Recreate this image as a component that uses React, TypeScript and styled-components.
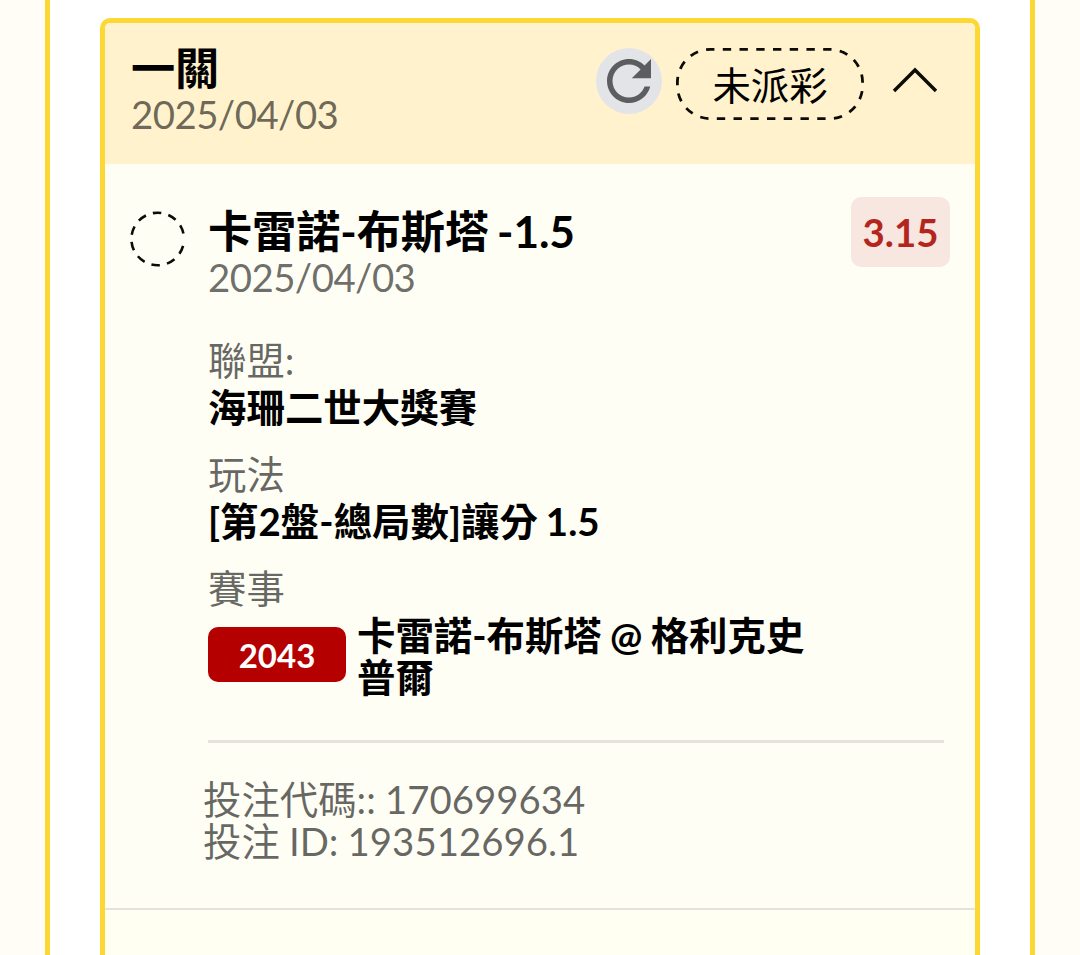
import { FC, ReactNode } from 'react';
import styled, { createGlobalStyle } from 'styled-components';

interface FieldTypes {
  label: string;
  value: string;
}

const fields: FieldTypes[] = [
  { label: '聯盟:', value: '海珊二世大獎賽' },
  { label: '玩法', value: '[第2盤-總局數]讓分 1.5' },
];

const RefreshIcon = () => (
  <svg width="66" height="66" viewBox="0 0 24 24" fill="#5c5d5e">
    <path d="M17.65 6.35C16.2 4.9 14.21 4 12 4c-4.42 0-7.99 3.58-7.99 8s3.57 8 7.99 8c3.73 0 6.84-2.55 7.73-6h-2.08c-.82 2.33-3.04 4-5.65 4-3.31 0-6-2.69-6-6s2.69-6 6-6c1.66 0 3.14.69 4.22 1.78L13 11h7V4l-2.35 2.35z" />
  </svg>
);

const ChevronUp = () => (
  <svg width="46" height="28" viewBox="0 0 46 28" fill="none">
    <path d="M2 25L23 4L44 25" stroke="#0c0b06" strokeWidth="3.4" />
  </svg>
);

const StatusPill: FC<{ children: ReactNode }> = ({ children }) => (
  <Pill>
    <svg width="188" height="72" fill="none">
      <rect
        x="1.4"
        y="1.4"
        width="185.2"
        height="69.2"
        rx="33"
        pathLength="27"
        stroke="#0c0b06"
        strokeWidth="2.8"
        strokeDasharray="0.5 0.5"
        strokeDashoffset="0.26"
      />
    </svg>
    {children}
  </Pill>
);

const PendingMark = () => (
  <svg width="56" height="56" viewBox="0 0 56 56" fill="none">
    <circle
      cx="27.7"
      cy="28"
      r="26.3"
      pathLength="360"
      stroke="#0c0b06"
      strokeWidth="2.6"
      strokeDasharray="19 15.8"
      strokeDashoffset="-15.5"
    />
  </svg>
);

const App: FC = () => {
  return (
    <>
      <GlobalStyle />
      <Page>
        <Panel>
          <Card>
            <Header>
              <div>
                <Title>一關</Title>
                <DateText>2025/04/03</DateText>
              </div>
              <Actions>
                <RefreshButton aria-label="refresh">
                  <RefreshIcon />
                </RefreshButton>
                <StatusPill>未派彩</StatusPill>
                <ToggleButton aria-label="toggle">
                  <ChevronUp />
                </ToggleButton>
              </Actions>
            </Header>
            <Selection>
              <Mark>
                <PendingMark />
              </Mark>
              <Details>
                <Title>卡雷諾-布斯塔 -1.5</Title>
                <DateText>2025/04/03</DateText>
                <FieldList>
                  {fields.map((field) => (
                    <Field key={field.label}>
                      <Label>{field.label}</Label>
                      <Value>{field.value}</Value>
                    </Field>
                  ))}
                  <Label>賽事</Label>
                </FieldList>
                <Match>
                  <MatchCode>2043</MatchCode>
                  <Teams>卡雷諾-布斯塔 @ 格利克史普爾</Teams>
                </Match>
                <Divider />
                <BetInfo>
                  <div>投注代碼:: 170699634</div>
                  <div>投注 ID: 193512696.1</div>
                </BetInfo>
              </Details>
              <Odds>3.15</Odds>
            </Selection>
            <NextRow />
          </Card>
        </Panel>
      </Page>
    </>
  );
};

export default App;

const GlobalStyle = createGlobalStyle`
  * {
    box-sizing: border-box;
  }
  body {
    margin: 0;
    overflow: hidden;
    background-color: #fffdf5;
    color: #000;
    font-family: Lato, 'Noto Sans CJK TC', sans-serif;
    font-size: 38.4px;
  }
  svg {
    display: block;
  }
`;

const Page = styled.div`
  height: 955px;
  padding: 0 45px;
  overflow: hidden;
`;

const Panel = styled.div`
  height: 100%;
  padding: 18px 50px 0;
  background-color: #fff;
  border: 5px solid #fdd835;
  border-width: 0 5px;
`;

const Card = styled.div`
  display: flex;
  flex-direction: column;
  height: 960px;
  border: 5px solid #fdd835;
  border-radius: 10px;
  background-color: #fffef5;
  overflow: hidden;
`;

const Header = styled.div`
  display: flex;
  justify-content: space-between;
  flex-shrink: 0;
  height: 141px;
  padding: 22px 37px 0 26px;
  background-color: #fff2cc;
`;

const Title = styled.div`
  font-size: 44.2px;
  font-weight: 700;
  line-height: 46px;
  letter-spacing: -0.1px;
  word-spacing: -2.5px;
  white-space: nowrap;
`;

const DateText = styled.div`
  line-height: 46px;
  letter-spacing: -0.55px;
  color: rgba(0, 0, 0, 0.59);
`;

const Actions = styled.div`
  display: flex;
  align-items: flex-start;
  padding-top: 3px;
`;

const RefreshButton = styled.button`
  width: 66px;
  height: 66px;
  margin-right: 14px;
  padding: 0;
  border: none;
  border-radius: 50%;
  background-color: #e3e4e8;
  cursor: pointer;
`;

const Pill = styled.div`
  position: relative;
  display: flex;
  justify-content: center;
  align-items: center;
  width: 188px;
  height: 72px;
  padding-top: 2px;
  line-height: 46px;
  svg {
    position: absolute;
    inset: 0;
  }
`;

const ToggleButton = styled.button`
  margin: 18px 0 0 28px;
  padding: 0;
  border: none;
  background: none;
  cursor: pointer;
`;

const Selection = styled.div`
  display: flex;
  flex-shrink: 0;
  align-items: flex-start;
  height: 746px;
  padding: 44px 25px 0;
  border-bottom: 2px solid #e5e2dc;
`;

const Mark = styled.div`
  width: 78px;
  padding-top: 3px;
`;

const Details = styled.div`
  width: 643px;
`;

const FieldList = styled.div`
  padding-top: 35px;
`;

const Field = styled.div`
  height: 114px;
`;

const Label = styled.div`
  height: 48px;
  line-height: 50px;
  color: rgba(0, 0, 0, 0.6);
`;

const Value = styled.div`
  font-weight: 700;
  line-height: 48px;
  letter-spacing: 0.05px;
  word-spacing: -1.5px;
  white-space: nowrap;
`;

const Match = styled.div`
  display: flex;
  align-items: flex-start;
  gap: 11px;
  margin-top: 3px;
`;

const MatchCode = styled.div`
  flex-shrink: 0;
  width: 138px;
  height: 55px;
  margin-top: 13px;
  border-radius: 10px;
  background-color: #b50000;
  color: #fff;
  font-size: 33px;
  font-weight: 700;
  line-height: 56px;
  text-align: center;
`;

const Teams = styled.div`
  width: 470px;
  font-weight: 700;
  line-height: 42px;
  word-spacing: -1px;
`;

const Divider = styled.div`
  width: 736px;
  height: 3px;
  margin-top: 42px;
  background-color: #e5e3dc;
`;

const BetInfo = styled.div`
  margin: 35px 0 0 -5px;
  line-height: 42px;
  word-spacing: -0.7px;
  color: rgba(0, 0, 0, 0.6);
`;

const Odds = styled.div`
  width: 99px;
  height: 70px;
  margin: -11px 0 0 auto;
  border-radius: 10px;
  background-color: #f7e7e0;
  color: #b3261e;
  font-weight: 700;
  line-height: 70px;
  text-align: center;
`;

const NextRow = styled.div`
  flex: 1;
  background-color: #fffff2;
`;
